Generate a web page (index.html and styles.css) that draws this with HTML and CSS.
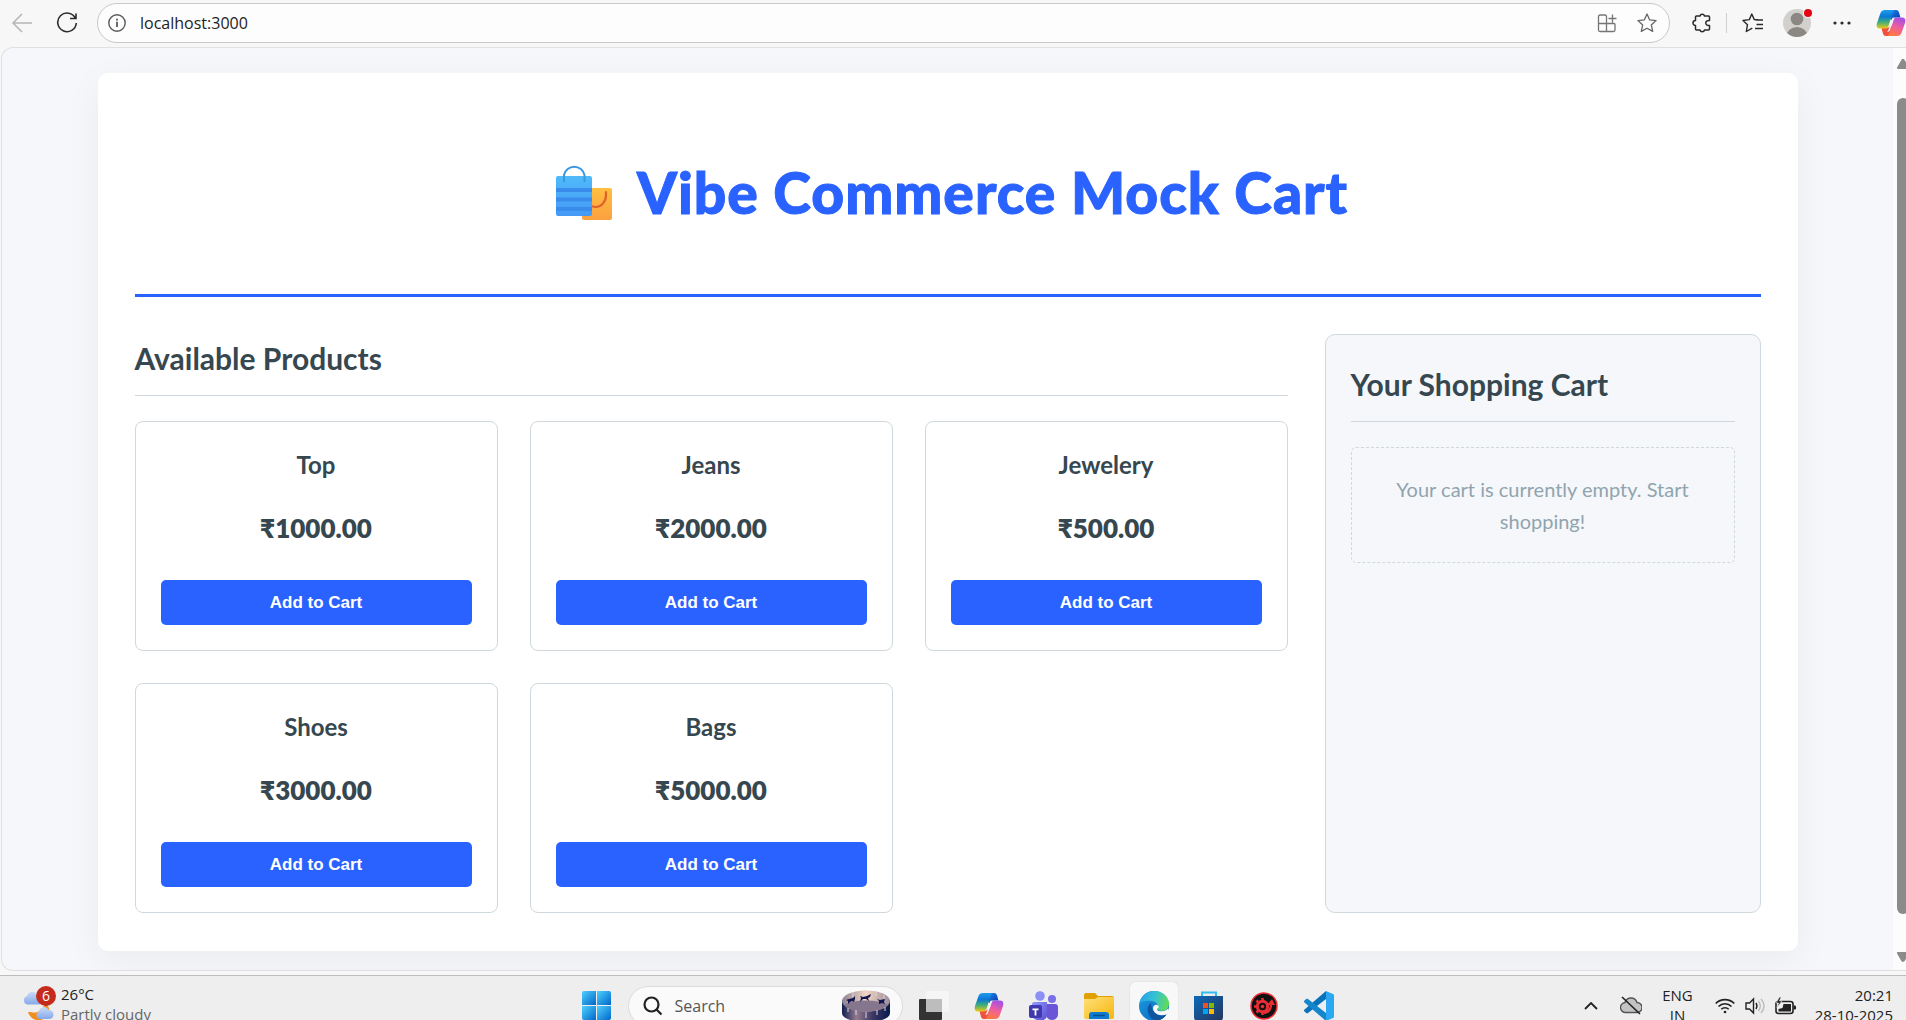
FILE: index.html
```html
<!DOCTYPE html>
<html lang="en">
<head>
<meta charset="utf-8">
<title>Vibe Commerce Mock Cart</title>
<link rel="stylesheet" href="styles.css">
</head>
<body>
<svg width="0" height="0" class="defs" aria-hidden="true">
  <defs>
    <linearGradient id="cpA" x1="0" y1="0" x2="0" y2="1"><stop offset="0" stop-color="#1c9cf0"/><stop offset=".35" stop-color="#0a78d4"/><stop offset=".65" stop-color="#3fae7a"/><stop offset="1" stop-color="#f2c811"/></linearGradient>
    <linearGradient id="cpB" x1=".6" y1="0" x2=".3" y2="1"><stop offset="0" stop-color="#a64fe8"/><stop offset=".5" stop-color="#ee5f9c"/><stop offset="1" stop-color="#ff7a3d"/></linearGradient>
    <linearGradient id="cpC" x1="0" y1="0" x2="1" y2="1"><stop offset="0" stop-color="#1a8df0"/><stop offset="1" stop-color="#0b2fae"/></linearGradient>
    <symbol id="copilot" viewBox="0 0 30 28">
      <path d="M17 1h3c2 0 2.600 1 3.200 3l1.200 4.500h-4c-2.500 0-3.500 1-4.200 3L13 9z" fill="url(#cpC)"/>
      <path d="M13 27h-3c-2 0-2.600-1-3.200-3l-1.300-5h5c2 0 3-1 4-3l3 2z" fill="#f0503c"/>
      <path d="M9 1h10c-1.500.5-2 1.500-2.600 3.500L12.500 17c-.7 2-1.600 2.600-3.600 2.600H4.300C1 19.600 0 17.500 1 14L4.500 4C5.300 2 6.500 1 9 1z" fill="url(#cpA)"/>
      <path d="M21 27H11c1.500-.5 2-1.500 2.600-3.500L17.500 11c.7-2 1.600-2.600 3.600-2.600h4.600c3.300 0 4.300 2.100 3.300 5.600L25.500 24c-.8 2-2 3-4.500 3z" fill="url(#cpB)"/>
      <path d="M16 9.500c.5-.8 1.500-1.100 3-1.100-1 .6-1.300 1.400-1.600 2.400L14 21c-.6 1.500-1.500 1.700-3 1.700 1-.6 1.200-1.200 1.600-2.200z" fill="#f4f4f4"/>
    </symbol>
    <linearGradient id="win" x1="0" y1="0" x2="1" y2="1"><stop offset="0" stop-color="#4fd0ff"/><stop offset="1" stop-color="#0067c9"/></linearGradient>
    <linearGradient id="fold" x1="0" y1="0" x2="1" y2="1"><stop offset="0" stop-color="#ffe07a"/><stop offset="1" stop-color="#f7b50c"/></linearGradient>
    <linearGradient id="edgeG" x1="0" y1=".3" x2="1" y2=".5"><stop offset="0" stop-color="#2a9fe8"/><stop offset=".5" stop-color="#35c1d4"/><stop offset="1" stop-color="#62dc58"/></linearGradient>
    <linearGradient id="edgeB" x1="0" y1="0" x2="1" y2="1"><stop offset="0" stop-color="#1b9de2"/><stop offset="1" stop-color="#0a62bd"/></linearGradient>
    <linearGradient id="store" x1="0" y1="0" x2="1" y2="1"><stop offset="0" stop-color="#0c69ba"/><stop offset="1" stop-color="#26355c"/></linearGradient>
    <linearGradient id="teams" x1="0" y1="0" x2="1" y2="1"><stop offset="0" stop-color="#8f9bff"/><stop offset="1" stop-color="#5b4fd0"/></linearGradient>
    <linearGradient id="drum" x1="0" y1="0" x2="1" y2="0"><stop offset="0" stop-color="#10204f"/><stop offset=".3" stop-color="#93798f"/><stop offset=".65" stop-color="#3a3763"/><stop offset="1" stop-color="#071a4c"/></linearGradient>
    <linearGradient id="drumIn" x1="0" y1="0" x2="1" y2="0"><stop offset="0" stop-color="#8c8494"/><stop offset=".5" stop-color="#f3d7c3"/><stop offset="1" stop-color="#9a8c9b"/></linearGradient>
    <linearGradient id="bagBlue" x1="0" y1="0" x2="0" y2="1"><stop offset="0" stop-color="#50bafa"/><stop offset="1" stop-color="#4499f5"/></linearGradient>
    <linearGradient id="bagGold" x1="0" y1="0" x2="0" y2="1"><stop offset="0" stop-color="#ffbf40"/><stop offset="1" stop-color="#fba13f"/></linearGradient>
    <linearGradient id="cloud" x1="0" y1="0" x2="0" y2="1"><stop offset="0" stop-color="#c9dafa"/><stop offset="1" stop-color="#86a8e8"/></linearGradient>
  </defs>
</svg>

<header class="toolbar">
  <button class="icon-btn back" aria-label="Back"><svg width="22" height="20" viewBox="0 0 22 20" fill="none" stroke="#b5b5b5" stroke-width="1.500"><path d="M21 10H2M11 1L2 10l9 9"/></svg></button>
  <button class="icon-btn reload" aria-label="Refresh"><svg width="22" height="22" viewBox="0 0 22 22" fill="none" stroke="#2b2b2b" stroke-width="1.600"><path d="M19.500 6.500A9.300 9.300 0 1 0 20.300 11M20 1.500v5h-6"/></svg></button>
  <div class="address">
    <svg width="18" height="18" viewBox="0 0 18 18" fill="none" stroke="#5a5a5a" stroke-width="1.400"><circle cx="9" cy="9" r="8.200"/><path d="M9 7.800v5.200M9 4.800v1.600" stroke-width="1.800"/></svg>
    <input class="url" type="text" aria-label="Address" value="localhost:3000">
    <button class="icon-btn" aria-label="Apps"><svg width="20" height="20" viewBox="0 0 20 20" fill="none" stroke="#757575" stroke-width="1.300"><path d="M9.500 19V3.500a1.500 1.500 0 0 0-1.500-1.500H3A1.500 1.500 0 0 0 1.500 3.500v13.500A1.500 1.500 0 0 0 3 18.500h13.500a1.500 1.500 0 0 0 1.500-1.500v-5.500a1 1 0 0 0-1-1H1.500M15.500 1.500v8M11.500 5.500h8"/></svg></button>
    <button class="icon-btn" aria-label="Add to favorites"><svg width="20" height="20" viewBox="0 0 20 20" fill="none" stroke="#666" stroke-width="1.300" stroke-linejoin="round"><path d="M10 1l2.700 5.900 6.400.7-4.800 4.300 1.400 6.500L10 15.200l-5.700 3.200 1.400-6.500L.9 7.600l6.400-.7z"/></svg></button>
  </div>
  <button class="icon-btn" aria-label="Extensions"><svg width="20" height="20" viewBox="0 0 20 20" fill="none" stroke="#2b2b2b" stroke-width="1.500" stroke-linejoin="round"><path d="M4.500 3H8a2.300 2.300 0 0 1 4.500 0h4a1 1 0 0 1 1 1v3.500c-5-.5-5 5.500 0 5V16a1 1 0 0 1-1 1h-4a2.300 2.300 0 0 1-4.500 0H4.500a1 1 0 0 1-1-1v-3.500a2.500 2.500 0 0 1 0-5V4a1 1 0 0 1 1-1z"/></svg></button>
  <span class="divider"></span>
  <button class="icon-btn" aria-label="Favorites"><svg width="22" height="20" viewBox="0 0 22 20" fill="none" stroke="#2b2b2b" stroke-width="1.400" stroke-linejoin="round"><path d="M13.500 7H21M14.500 11.500H21M13 15.500h8M16 6.800l-3.700-.2L9.800 1 7.300 6.600 1 7.500l4.500 4.200L4.300 18.500l6-3.300"/></svg></button>
  <button class="icon-btn avatar" aria-label="Profile"><svg width="30" height="30" viewBox="0 0 30 30"><clipPath id="av"><circle cx="14" cy="15" r="14"/></clipPath><g clip-path="url(#av)"><rect width="30" height="30" fill="#d2d0cd"/><circle cx="14" cy="11" r="6.300" fill="#8b8783"/><ellipse cx="14" cy="28" rx="10.500" ry="9" fill="#8b8783"/></g><circle cx="25" cy="5" r="5" fill="#f7f7f7"/><circle cx="25" cy="5" r="4" fill="#e30613"/></svg></button>
  <button class="icon-btn more" aria-label="Settings and more"><svg width="18" height="4" viewBox="0 0 18 4" fill="#2b2b2b"><circle cx="2" cy="2" r="1.600"/><circle cx="9" cy="2" r="1.600"/><circle cx="16" cy="2" r="1.600"/></svg></button>
  <button class="icon-btn" aria-label="Copilot"><svg width="30" height="28"><use href="#copilot"/></svg></button>
</header>

<div class="viewport">
  <div class="page">
    <main class="container">
      <header class="store-header">
        <h1><svg class="bags" width="56" height="58" viewBox="0 0 56 58" aria-hidden="true"><rect x="26" y="25" width="30" height="32" rx="2" fill="url(#bagGold)"/><path d="M50 29v3c0 7-5 12-10 12-3 0-6-1-8-4" fill="none" stroke="#e0602e" stroke-width="2.200" stroke-linecap="round"/><rect x="0" y="13" width="36" height="40" rx="2" fill="url(#bagBlue)"/><path d="M0 25h36v4H0zM0 34.500h36v4H0zM0 44h36v4H0z" fill="#3a8cec"/><path d="M8 19v-7a10.500 10.500 0 0 1 20.500 0v7" fill="none" stroke="#3d97e0" stroke-width="2"/></svg>Vibe Commerce Mock Cart</h1>
      </header>
      <div class="layout">
        <section class="products">
          <h2>Available Products</h2>
          <div class="grid">
            <article class="card"><h3>Top</h3><p class="price">₹1000.00</p><button class="add">Add to Cart</button></article>
            <article class="card"><h3>Jeans</h3><p class="price">₹2000.00</p><button class="add">Add to Cart</button></article>
            <article class="card"><h3>Jewelery</h3><p class="price">₹500.00</p><button class="add">Add to Cart</button></article>
            <article class="card"><h3>Shoes</h3><p class="price">₹3000.00</p><button class="add">Add to Cart</button></article>
            <article class="card"><h3>Bags</h3><p class="price">₹5000.00</p><button class="add">Add to Cart</button></article>
          </div>
        </section>
        <aside class="cart">
          <h2>Your Shopping Cart</h2>
          <p class="empty">Your cart is currently empty. Start shopping!</p>
        </aside>
      </div>
    </main>
  </div>
  <div class="scrollbar" aria-hidden="true">
    <svg width="12" height="10" viewBox="0 0 12 10"><path d="M6 0c1 0 1.300.5 1.800 1.200L12 8.500c.3 1 0 1.500-1 1.500H1C0 10-.3 9.500 0 8.500L4.200 1.200C4.700.5 5 0 6 0z" fill="#8b8b8b"/></svg>
    <span class="thumb"></span>
    <svg width="12" height="10" viewBox="0 0 12 10"><path d="M6 10c1 0 1.300-.5 1.800-1.200L12 1.500C12.300.5 12 0 11 0H1C0 0-.3.5 0 1.500l4.200 7.300C4.700 9.500 5 10 6 10z" fill="#8b8b8b"/></svg>
  </div>
</div>

<footer class="taskbar">
  <div class="weather">
    <svg width="34" height="36" viewBox="0 0 34 36"><path d="M9 26c5 2 12-1 14-9 5 3 6 10 0 15-5 4-14 3-17-6z" fill="#f28f1c"/><path d="M5 18.500a4.500 4.500 0 0 1 0-8.500 5.500 5.500 0 0 1 10-1.500c4 0 6 2 6 5s-2 5-5 5z" fill="url(#cloud)"/><path d="M17 33a4 4 0 0 1 0-7.500 5 5 0 0 1 9.500-1.500c3 0 5 2 5 4.500S30 33 27 33z" fill="url(#cloud)"/><circle cx="24" cy="10" r="10" fill="#c42b1c"/><text x="24" y="15" class="badge">6</text></svg>
    <div class="lines"><span>26°C</span><span class="muted">Partly cloudy</span></div>
  </div>
  <nav class="apps">
    <button class="tile" aria-label="Start"><svg width="30" height="30" viewBox="0 0 30 30" fill="url(#win)"><path d="M0 2a2 2 0 0 1 2-2h12v14H0z"/><path d="M15 0h12a2 2 0 0 1 2 2v12H15z"/><path d="M0 15h14v14H2a2 2 0 0 1-2-2z"/><path d="M15 15h14v12a2 2 0 0 1-2 2H15z"/></svg></button>
    <label class="search">
      <svg width="20" height="20" viewBox="0 0 20 20" fill="none" stroke="#222" stroke-width="2.200"><circle cx="8.500" cy="8.500" r="7"/><path d="M13.500 13.500l5 5"/></svg>
      <input type="text" placeholder="Search">
      <svg width="48" height="32" viewBox="0 0 48 32"><path d="M0 10v13c0 12 48 12 48 0V10z" fill="url(#drum)"/><ellipse cx="24" cy="11" rx="24" ry="10.500" fill="url(#drumIn)"/><path d="M2 15c8-6 36-6 44 0-6 9-38 9-44 0z" fill="#85768d"/><g fill="#14174f"><path d="M4 10l3-1 4-1 2-2v3l-1 3-2-1-2 1-2 2v-3zM18 6l3 1 4-1 4-2-1 3-2 1 1 3-3-2-3 0-3 3 1-4zM35 9l3 1 5-1-1 3 1 2-3-1-3 1v-3z"/></g><path d="M11 2v5M23 0v3M34 2v4M42 5v4M6 18v4M14 20v5M24 22v6M35 20v5M43 17v4" stroke="#ddd3df" stroke-width="1"/></svg>
    </label>
    <button class="tile" aria-label="Task view"><svg width="30" height="30" viewBox="0 0 30 30"><rect x="0" y="8" width="23" height="21" rx="1" fill="#333"/><rect x="7" y="0" width="23" height="21" rx="1" fill="#f5f5f5"/><rect x="7" y="8" width="16" height="13" fill="#bdbdbd"/></svg></button>
    <button class="tile" aria-label="Copilot"><svg width="30" height="28"><use href="#copilot"/></svg></button>
    <button class="tile" aria-label="Teams"><svg width="30" height="30" viewBox="0 0 30 30"><circle cx="11" cy="5" r="4.800" fill="#8c8ff5"/><circle cx="23" cy="8" r="4" fill="#7a6fe8"/><path d="M17 13h9c2 0 3 1 3 3v7c0 8-12 8-12 0z" fill="#6a55d8"/><path d="M5 11h13v13c0 8-14 7-15 0V13c0-1 1-2 2-2z" fill="url(#teams)"/><rect x="0" y="14" width="13" height="13" rx="2" fill="#4038b0"/><path d="M3.500 17.500h6v1.800H7.400v5.200H5.600v-5.200H3.500z" fill="#fff"/></svg></button>
    <button class="tile" aria-label="File Explorer"><svg width="30" height="30" viewBox="0 0 30 30"><path d="M0 4a2 2 0 0 1 2-2h9l3 3h14a2 2 0 0 1 2 2v5H0z" fill="#e0a000"/><path d="M0 8h11l3-2h16v20a2 2 0 0 1-2 2H2a2 2 0 0 1-2-2z" fill="url(#fold)"/><path d="M5 28v-4a3 3 0 0 1 3-3h14a3 3 0 0 1 3 3v4z" fill="#0f7bd0"/><path d="M9 24.500h12" stroke="#0a4f90" stroke-width="1.500"/></svg></button>
    <button class="tile active" aria-label="Edge"><svg width="30" height="30" viewBox="0 0 30 30"><circle cx="15" cy="15" r="15" fill="url(#edgeB)"/><path d="M.3 13C2 4 8 0 15 0c9 0 15 6 15 12.500 0 4.500-3 7.500-7 7.500-3 0-5-1-4.500-2.500 2-3-1-7-6-7.500C8 9.500 2 10 .3 13z" fill="url(#edgeG)"/><path d="M12 12c-5 3-5 13 4 17.500 5 .5 9-2 11.500-6-4 2-9 1-12-2-3-3.500-3-6-3.500-9.500z" fill="#10559f"/><path d="M18.500 17.500c-1 1.500.5 3 4 2.800 3 0 5-1 6.700-3l.8 3c-1 1.500-1.500 2.500-2.500 3.200-6 2-11 0-13-4-2-5 3-7.500 5-4.500.5 1 0 2-1 2.500z" fill="#f7f7f7"/></svg></button>
    <button class="tile" aria-label="Microsoft Store"><svg width="30" height="30" viewBox="0 0 30 30"><path d="M8 7V1.500h14V7" fill="none" stroke="#34bdf0" stroke-width="2"/><path d="M0 5h29v21a4 4 0 0 1-4 4H4a4 4 0 0 1-4-4z" fill="url(#store)"/><path d="M9 12h5v5H9z" fill="#f25022"/><path d="M15 12h5v5h-5z" fill="#7fba00"/><path d="M9 18h5v5H9z" fill="#00a4ef"/><path d="M15 18h5v5h-5z" fill="#ffb900"/></svg></button>
    <button class="tile" aria-label="Game booster"><svg width="28" height="28" viewBox="0 0 28 28"><circle cx="14" cy="14" r="13" fill="#111" stroke="#ef2b35" stroke-width="1.500"/><circle cx="12.500" cy="14.500" r="5.200" fill="none" stroke="#ea2d35" stroke-width="3"/><path d="M12.500 6v4M12.500 19v4M4 14.500h4M6.500 8.500l3 3M6.500 20.500l3-3" stroke="#ea2d35" stroke-width="2.600"/><path d="M14 19c4 0 6-3 6-6h-3l5-6 3 6h-3c0 5-3 9-8 9z" fill="#ea2d35"/><circle cx="12.500" cy="14.500" r="1.800" fill="#ea2d35"/></svg></button>
    <button class="tile" aria-label="Visual Studio Code"><svg width="30" height="30" viewBox="0 0 30 30"><path d="M22 0v8L4 22c-.7.5-1.200.4-1.800 0L.5 20.500c-.7-.7-.7-1.300 0-2z" fill="#0a72b8"/><path d="M22 30v-8L4 8c-.7-.5-1.200-.4-1.800 0L.5 9.500c-.7.7-.7 1.300 0 2z" fill="#1486cc"/><path d="M22 0l7 3c.7.300 1 .8 1 1.500v21c0 .7-.3 1.200-1 1.500l-7 3z" fill="#29a8f3"/></svg></button>
  </nav>
  <div class="tray">
    <svg width="14" height="8" viewBox="0 0 14 8" fill="none" stroke="#222" stroke-width="1.800"><path d="M1 7l6-6 6 6"/></svg>
    <svg class="cloud" width="22" height="20" viewBox="0 0 22 20"><path d="M6 16.500a5 5 0 0 1-1-10C6 3.500 8.500 2 11 2s5 1.500 6 4.500a5 5 0 0 1 0 10z" fill="#c4c4c4" stroke="#555" stroke-width="1.400"/><path d="M2 1l18 17" stroke="#222" stroke-width="1.700"/></svg>
    <div class="lines lang"><span>ENG</span><span>IN</span></div>
    <svg width="20" height="16" viewBox="0 0 20 16" fill="none" stroke="#222" stroke-width="1.600"><path d="M.7 5.500a13 13 0 0 1 18.600 0M3.500 8.500a9 9 0 0 1 13 0M6.300 11.300a5.200 5.200 0 0 1 7.400 0"/><circle cx="10" cy="14" r="1.300" fill="#222" stroke="none"/></svg>
    <svg width="20" height="18" viewBox="0 0 20 18" fill="none" stroke="#222" stroke-width="1.400"><path d="M1 6h3.500L8.500 2v14l-4-4H1zM11 6c1.300 2 1.300 4 0 6"/><path d="M13.500 4c2.500 3.500 2.500 6.500 0 10M16 2c4 4.500 4 9.500 0 14" stroke="#bbb"/></svg>
    <svg width="22" height="18" viewBox="0 0 22 18"><rect x="1" y="4.500" width="17" height="12" rx="2.500" fill="none" stroke="#222" stroke-width="1.600"/><path d="M3.500 14.500V12l4-1 1-4H16v7.500z" fill="#222"/><path d="M18.500 8.500H20a1 1 0 0 1 1 1v2a1 1 0 0 1-1 1h-1.500z" fill="#222"/><path d="M4.500 0L1 6h2.500L2 10.500 7 4H4.500L6 0z" fill="#222" stroke="#eee" stroke-width=".6"/></svg>
    <div class="lines clock"><span>20:21</span><span>28-10-2025</span></div>
  </div>
</footer>
</body>
</html>
```
FILE: styles.css
```css
* { box-sizing: border-box; }

body {
  margin: 0;
  height: 100vh;
  display: flex;
  flex-direction: column;
  overflow: hidden;
  background: #f7f7f7;
  font-family: "Open Sans", "Noto Sans", sans-serif;
}

h1, h2, h3, p { margin: 0; }
svg { display: block; flex: none; }
button { padding: 0; border: 0; background: none; }
.defs { position: absolute; }

/* Browser toolbar */
.toolbar {
  flex: none;
  height: 47px;
  display: flex;
  align-items: center;
  padding: 0 0 2px 11px;
}
.icon-btn { display: flex; align-items: center; justify-content: center; flex: none; }
.reload { margin: 0 19px 0 23px; }
.address {
  flex: 1;
  height: 40px;
  display: flex;
  align-items: center;
  gap: 20px;
  margin-right: 22px;
  padding: 0 12px 0 10px;
  border: 1px solid #c8c8c8;
  border-radius: 20px;
  background: #fdfdfd;
}
.url {
  flex: 1;
  min-width: 0;
  margin-left: -6px;
  padding: 0;
  border: 0;
  background: none;
  color: #222;
  font: 16px "Open Sans", sans-serif;
}
.divider { width: 1px; height: 20px; margin: 0 15px 0 14px; background: #cfcfcf; }
.avatar { margin-left: 19px; }
.more { margin: 0 25px 0 20px; }

/* Web page area */
.viewport {
  flex: 1;
  min-height: 0;
  display: flex;
  margin: 0 0 4px 1px;
  border: 1px solid #e0e0e2;
  border-right: 0;
  border-radius: 12px 0 0 12px;
  overflow: hidden;
  background: #f5f7fb;
}
.page { flex: 1; min-width: 0; padding: 25px 20px 0; }
.container {
  max-width: 1700px;
  margin: 0 auto;
  padding: 37px 37px 38px;
  border-radius: 10px;
  background: #fff;
  box-shadow: 0 10px 38px rgba(0, 0, 0, .05);
  color: #36474f;
  font-family: Lato, sans-serif;
  line-height: 1.6;
}
.store-header {
  margin-bottom: 37px;
  padding: 37px 0 57px;
  border-bottom: 3px solid #2962ff;
}
h1 {
  display: flex;
  align-items: center;
  justify-content: center;
  gap: 25px;
  padding-left: 9px;
  color: #2962ff;
  font-size: 57px;
  font-weight: 900;
  line-height: 90px;
  letter-spacing: 1px;
  -webkit-text-stroke: 1px #2962ff;
}
.layout { display: grid; grid-template-columns: minmax(0, 1fr) 436px; gap: 37px; }
h2 {
  margin-bottom: 25px;
  padding-bottom: 13px;
  border-bottom: 1px solid #cfd8dc;
  font-size: 30px;
  font-weight: 700;
}
.grid { display: grid; grid-template-columns: repeat(3, 1fr); gap: 32px; }
.card {
  display: flex;
  flex-direction: column;
  padding: 25px;
  border: 1px solid #cfd8dc;
  border-radius: 8px;
  text-align: center;
}
h3 {
  font-size: 24px;
  font-weight: 700;
  line-height: 36px;
}
.price {
  margin: 24px 0 31px;
  font-size: 26px;
  font-weight: 800;
  line-height: 42px;
}
.add {
  height: 45px;
  border-radius: 5px;
  background: #2962ff;
  color: #fff;
  font: bold 17px "Liberation Sans", Arial, sans-serif;
}
.cart {
  padding: 25px;
  border: 1px solid #cfd8dc;
  border-radius: 10px;
  background: #f5f7fb;
}
.empty {
  padding: 25px;
  border: 1px dashed #cfd8dc;
  border-radius: 5px;
  color: #90a4ae;
  font-size: 20px;
  line-height: 32px;
  text-align: center;
}

.scrollbar {
  width: 13px;
  flex: none;
  display: flex;
  flex-direction: column;
  padding: 11px 0 8px 4px;
  overflow: hidden;
  background: #fcfcfc;
}
.thumb { flex: 1; width: 12px; margin: 29px 0 38px; border-radius: 6px; background: #8b8b8b; }

/* Desktop taskbar */
.taskbar {
  flex: none;
  height: 45px;
  display: grid;
  grid-template-columns: 1fr auto 1fr;
  grid-template-rows: 60px;
  align-items: center;
  padding: 0 13px 0 22px;
  border-top: 1px solid #bdbdbd;
  background: #eee;
  color: #222;
  font-size: 15px;
  line-height: 20px;
  overflow: hidden;
}
.weather { display: flex; align-items: center; gap: 5px; padding-bottom: 5px; }
.badge { fill: #fff; font-size: 14px; text-anchor: middle; }
.lines { display: flex; flex-direction: column; padding-bottom: 3px; }
.weather .lines { padding-bottom: 0; }
.muted { color: #666; }
.apps { display: flex; align-items: center; gap: 7px; }
.tile {
  width: 48px;
  height: 48px;
  display: flex;
  align-items: center;
  justify-content: center;
  border-radius: 5px;
}
.active { background: #f8f8f8; box-shadow: 0 0 1px #bbb; }
.search {
  width: 275px;
  height: 40px;
  display: flex;
  align-items: center;
  gap: 12px;
  padding: 0 12px 0 14px;
  border: 1px solid #dcdcdc;
  border-radius: 20px;
  background: #fafafa;
}
.search input {
  flex: 1;
  min-width: 0;
  padding: 0;
  border: 0;
  background: none;
  font: 16px "Open Sans", sans-serif;
}
.search input::placeholder { color: #555; opacity: 1; }
.tray { display: flex; align-items: center; justify-content: flex-end; gap: 10px; }
.cloud { margin: 0 10px 0 12px; }
.lang { align-items: center; margin-right: 12px; }
.clock { align-items: flex-end; margin-left: 8px; }
```
